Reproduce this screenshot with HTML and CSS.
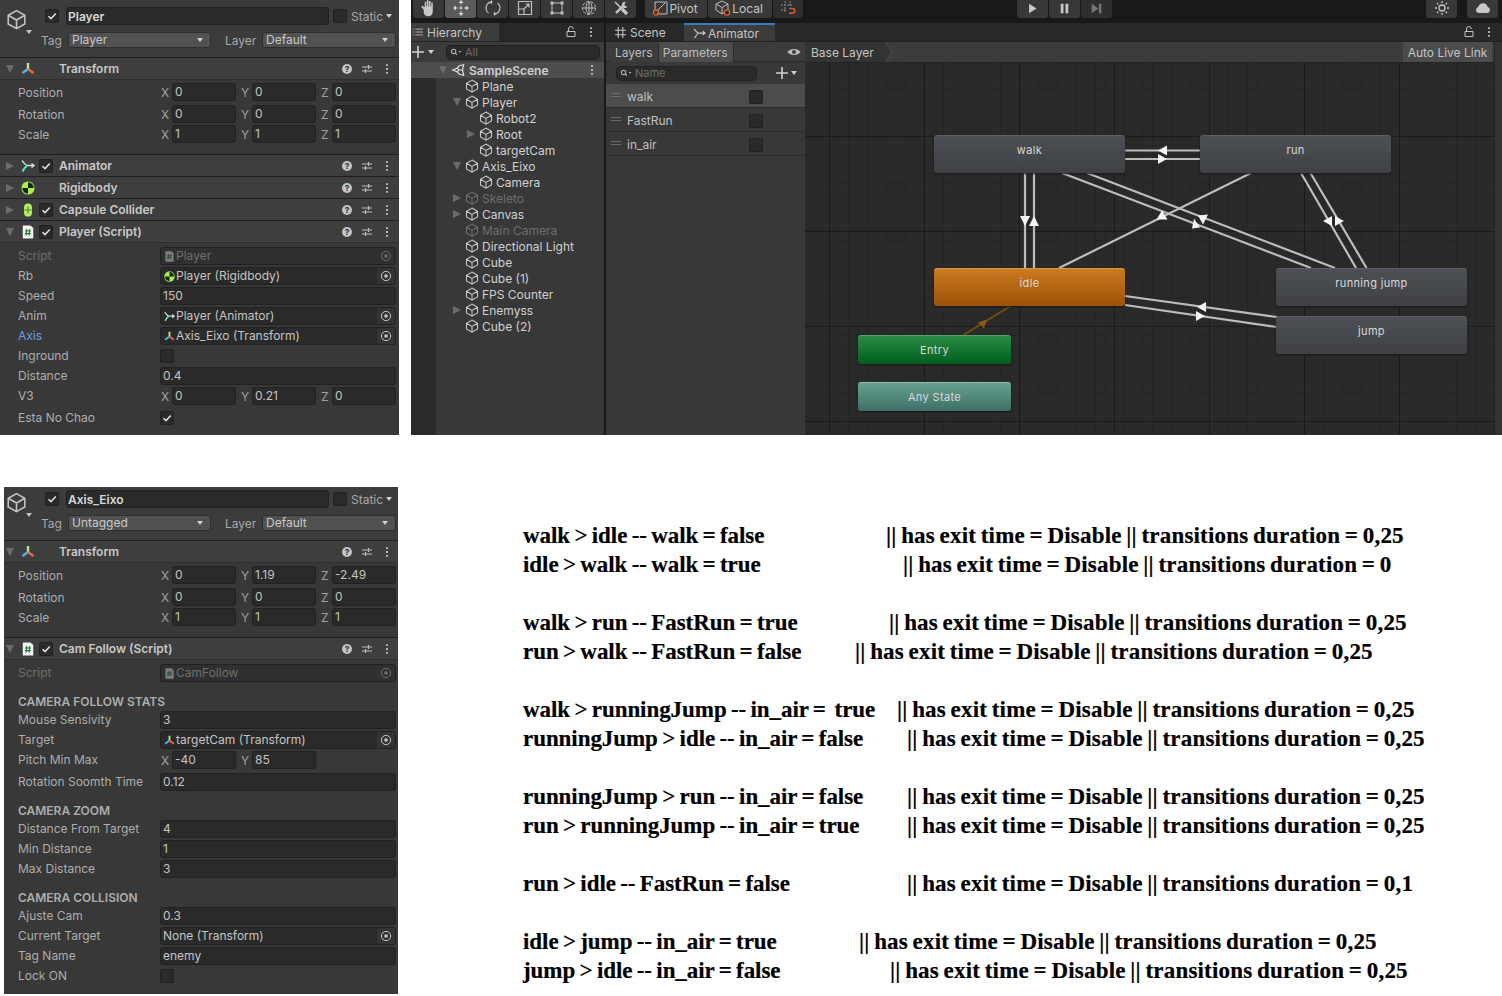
FILE: index.html
```html
<!DOCTYPE html>
<html lang="en">
<head>
  <meta charset="UTF-8">
  <title>Animator setup notes</title>
  <link rel="stylesheet" href="styles.css">
</head>
<body>
  <svg class="defs" width="0" height="0">
    <symbol id="cube" viewBox="0 0 16 16"><path d="M8 1.200 14.300 4.800v6.600L8 15 1.700 11.400V4.800zM1.700 4.800 8 8.400l6.300-3.600M8 8.400V15" fill="none" stroke="currentColor" stroke-width="1.200"/></symbol>
    <symbol id="transform" viewBox="0 0 14 14"><path d="M7 1v6" stroke="#b8e986" stroke-width="2.400"/><path d="M7 7 1.500 11" stroke="#4fb7e8" stroke-width="2.400"/><path d="M7 7l5.500 4" stroke="#ef6a3a" stroke-width="2.400"/></symbol>
    <symbol id="animator" viewBox="0 0 14 14"><path d="M1 1.500C3 3.500 4 6.500 6.500 6.500H13M10.500 4.500l2.500 2-2.500 2" fill="none" stroke="#d8d8d8" stroke-width="1.500"/><path d="M6 7C4 7.500 3 10 1.500 12.500" fill="none" stroke="#5fe0d8" stroke-width="2"/></symbol>
    <symbol id="rigid" viewBox="0 0 16 16"><circle cx="8" cy="8" r="7.500" fill="#a6f04c"/><path d="M8 1.500A6.500 6.500 0 0 1 14.500 8H8zM8 8v6.500A6.500 6.500 0 0 1 1.500 8z" fill="#15210c"/></symbol>
    <symbol id="capsule" viewBox="0 0 14 16"><rect x="2.500" y="0.500" width="9" height="15" rx="4.500" fill="#b4f060"/><path d="M7 4v8M3 8h8" stroke="#4a6a28" stroke-width="1"/></symbol>
    <symbol id="script" viewBox="0 0 14 16"><path d="M1 0.500h9l3 3v12H1z" fill="#f2f2f2"/><path d="M5.600 4.500 4.800 12M9 4.500 8.200 12M3.600 6.800h6.800M3.400 9.800h6.800" stroke="#1e7a3a" stroke-width="1.300" fill="none"/></symbol>
    <symbol id="sliders" viewBox="0 0 10 10"><path d="M0 3h10M0 7h10M6.500 1v4M3.500 5v4" stroke="#bdbdbd" stroke-width="1.200"/></symbol>
    <symbol id="dots" viewBox="0 0 10 10"><path d="M5 0.300v1.800M5 4.100v1.800M5 7.900v1.800" stroke="#c4c4c4" stroke-width="1.800"/></symbol>
    <symbol id="target" viewBox="0 0 12 12"><circle cx="6" cy="6" r="4.600" fill="none" stroke="currentColor" stroke-width="1"/><circle cx="6" cy="6" r="1.800" fill="currentColor"/></symbol>
    <symbol id="check" viewBox="0 0 12 12"><path d="M2.500 6.200 5 8.600 9.800 3.400" fill="none" stroke="#e2e2e2" stroke-width="1.500"/></symbol>
    <symbol id="lock" viewBox="0 0 12 12"><path d="M3.500 5V3a2.400 2.400 0 0 1 4.800 0M2 5.500h8v5H2z" fill="none" stroke="#c4c4c4" stroke-width="1"/></symbol>
    <symbol id="plus" viewBox="0 0 12 12"><path d="M6 0v12M0 6h12" stroke="#d0d0d0" stroke-width="1.600"/></symbol>
    <symbol id="search" viewBox="0 0 12 8"><circle cx="3.600" cy="3.400" r="2.200" fill="none" stroke="#b0b0b0" stroke-width="1.100"/><path d="M5.200 5 7 6.800" stroke="#b0b0b0" stroke-width="1.100"/><path d="M8.500 3h3L10 4.800z" fill="#b0b0b0"/></symbol>
  </svg>

  <div class="top">
    <section class="inspector">
      <header class="go-head">
        <div class="go-icon">
          <svg class="ic-go"><use href="#cube"/></svg>
          <i class="mini-arrow"></i>
        </div>
        <div class="go-rows">
          <div class="go-row first">
            <span class="box"><svg><use href="#check"/></svg></span>
            <div class="name">Player</div>
            <span class="box"></span>
            <span class="static">Static</span>
            <i class="mini-arrow light"></i>
          </div>
          <div class="go-row">
            <span class="small-label">Tag</span>
            <div class="drop tag">Player<i class="mini-arrow light"></i></div>
            <span class="small-label layer">Layer</span>
            <div class="drop lay">Default<i class="mini-arrow light"></i></div>
          </div>
        </div>
      </header>

      <div class="comp-head">
        <i class="tri down"></i><svg class="ic"><use href="#transform"/></svg><span class="box hidden"></span>
        <b>Transform</b>
        <div class="actions"><span class="help">?</span><svg><use href="#sliders"/></svg><svg><use href="#dots"/></svg></div>
      </div>
      <div class="comp-body transform-body">
        <div class="row gap"><span class="label">Position</span><div class="vec"><div class="axis"><span>X</span><div class="field">0</div></div><div class="axis"><span>Y</span><div class="field">0</div></div><div class="axis"><span>Z</span><div class="field">0</div></div></div></div>
        <div class="row"><span class="label">Rotation</span><div class="vec"><div class="axis"><span>X</span><div class="field">0</div></div><div class="axis"><span>Y</span><div class="field">0</div></div><div class="axis"><span>Z</span><div class="field">0</div></div></div></div>
        <div class="row"><span class="label">Scale</span><div class="vec"><div class="axis"><span>X</span><div class="field">1</div></div><div class="axis"><span>Y</span><div class="field">1</div></div><div class="axis"><span>Z</span><div class="field">1</div></div></div></div>
      </div>

      <div class="comp-head">
        <i class="tri"></i><svg class="ic"><use href="#animator"/></svg><span class="box"><svg><use href="#check"/></svg></span>
        <b>Animator</b>
        <div class="actions"><span class="help">?</span><svg><use href="#sliders"/></svg><svg><use href="#dots"/></svg></div>
      </div>
      <div class="comp-head">
        <i class="tri"></i><svg class="ic"><use href="#rigid"/></svg><span class="box hidden"></span>
        <b>Rigidbody</b>
        <div class="actions"><span class="help">?</span><svg><use href="#sliders"/></svg><svg><use href="#dots"/></svg></div>
      </div>
      <div class="comp-head">
        <i class="tri"></i><svg class="ic"><use href="#capsule"/></svg><span class="box"><svg><use href="#check"/></svg></span>
        <b>Capsule Collider</b>
        <div class="actions"><span class="help">?</span><svg><use href="#sliders"/></svg><svg><use href="#dots"/></svg></div>
      </div>
      <div class="comp-head">
        <i class="tri down"></i><svg class="ic"><use href="#script"/></svg><span class="box"><svg><use href="#check"/></svg></span>
        <b>Player (Script)</b>
        <div class="actions"><span class="help">?</span><svg><use href="#sliders"/></svg><svg><use href="#dots"/></svg></div>
      </div>
      <div class="comp-body script-body">
        <div class="row dim"><span class="label">Script</span><div class="field obj"><svg class="ic-obj"><use href="#script"/></svg>Player<span class="pick"><svg><use href="#target"/></svg></span></div></div>
        <div class="row"><span class="label">Rb</span><div class="field obj"><svg class="ic-obj"><use href="#rigid"/></svg>Player (Rigidbody)<span class="pick"><svg><use href="#target"/></svg></span></div></div>
        <div class="row"><span class="label">Speed</span><div class="field">150</div></div>
        <div class="row"><span class="label">Anim</span><div class="field obj"><svg class="ic-obj"><use href="#animator"/></svg>Player (Animator)<span class="pick"><svg><use href="#target"/></svg></span></div></div>
        <div class="row"><span class="label changed">Axis</span><div class="field obj"><svg class="ic-obj"><use href="#transform"/></svg>Axis_Eixo (Transform)<span class="pick"><svg><use href="#target"/></svg></span></div></div>
        <div class="row"><span class="label">Inground</span><span class="box"></span></div>
        <div class="row"><span class="label">Distance</span><div class="field">0.4</div></div>
        <div class="row gap"><span class="label">V3</span><div class="vec"><div class="axis"><span>X</span><div class="field">0</div></div><div class="axis"><span>Y</span><div class="field">0.21</div></div><div class="axis"><span>Z</span><div class="field">0</div></div></div></div>
        <div class="row"><span class="label">Esta No Chao</span><span class="box"><svg><use href="#check"/></svg></span></div>
      </div>
    </section>

    <section class="editor">
      <div class="toolbar">
        <div class="tool-group">
          <button class="tool hand"><svg viewBox="0 0 16 16"><path d="M4 9 1.800 6.500 3 5.600l1.800 1.600V2.400h1.300v4h.5V1h1.400v5.400h.5V1.600h1.300v4.800h.5V3h1.300v7.500c0 2.500-1.500 4-3.800 4-2 0-3-1-3.800-2.500z" fill="#c8c8c8"/></svg></button>
          <button class="tool on"><svg viewBox="0 0 16 16"><path d="M8 1v14M1 8h14" stroke="#d8d8d8" stroke-dasharray="3.500 1.500"/><path d="M8 0 5.500 3h5zM8 16l-2.500-3h5zM0 8l3-2.500v5zM16 8l-3-2.500v5z" fill="#d8d8d8"/></svg></button>
          <button class="tool"><svg viewBox="0 0 16 16"><path d="M3.500 13A6.200 6.200 0 0 1 7.500 1.900M12.500 3a6.200 6.200 0 0 1-4 11.100" fill="none" stroke="#bdbdbd" stroke-width="1.200"/><path d="M7 0v4.500L4.500 2.200zM9 16v-4.500l2.500 2.300z" fill="#bdbdbd"/></svg></button>
          <button class="tool"><svg viewBox="0 0 16 16"><path d="M1.500 1.500h13v13h-13zM1.500 9h5.500v5.500M6.500 9.500 12 4M8.500 4H12v3.500" fill="none" stroke="#bdbdbd" stroke-width="1.200"/></svg></button>
          <button class="tool"><svg viewBox="0 0 16 16"><path d="M3 3h10v10H3z" fill="none" stroke="#bdbdbd"/><path d="M1.500 1.500h3v3h-3zM11.500 1.500h3v3h-3zM1.500 11.500h3v3h-3zM11.500 11.500h3v3h-3z" fill="#bdbdbd"/></svg></button>
          <button class="tool"><svg viewBox="0 0 16 16"><circle cx="8" cy="8" r="6.500" fill="none" stroke="#bdbdbd" stroke-dasharray="3 1.500"/><path d="M8 2v12M2 8h12M5 8a3 6 0 0 1 6 0 3 6 0 0 1-6 0" fill="none" stroke="#bdbdbd"/></svg></button>
          <button class="tool"><svg viewBox="0 0 16 16"><path d="M2 2l7 7" stroke="#c8c8c8" stroke-width="1.500"/><path d="M9 9l5 5" stroke="#c8c8c8" stroke-width="3.200"/><path d="M3 13l7-7" stroke="#c8c8c8" stroke-width="2.400"/><path d="M9 3.500a3.500 3.500 0 0 0 4 4.500l1.500-1.500-2.500-.5-.5-2.500L13 2a3.500 3.500 0 0 0-4 1.500z" fill="#c8c8c8"/></svg></button>
        </div>
        <div class="tool-group pivot">
          <button class="tool wide"><svg viewBox="0 0 16 16"><path d="M3 2h12v12H5M3 2v8M13 3 6 10" fill="none" stroke="#bdbdbd"/><circle cx="4" cy="12.500" r="2.600" fill="none" stroke="#e8622c" stroke-width="1.300"/></svg>Pivot</button>
          <button class="tool wide"><svg viewBox="0 0 16 16"><path d="M7 1l6 3v6l-6 4-6-4V4zM1 4l6 3.500L13 4M7 7.500V14" fill="none" stroke="#bdbdbd"/><circle cx="12" cy="12.500" r="2.600" fill="#222" stroke="#e8622c" stroke-width="1.300"/></svg>Local</button>
          <button class="tool snap"><svg viewBox="0 0 16 16"><path d="M5 1v11M10 1v5M1 5h12M1 10h6" stroke="#8a8a8a" stroke-dasharray="2 1" fill="none"/><path d="M9 8.500h3.500a2.300 2.300 0 0 1 0 4.600H9" fill="none" stroke="#d05a2a" stroke-width="1.600"/></svg></button>
        </div>
        <div class="tool-group play">
          <button class="tool"><svg viewBox="0 0 16 16"><path d="M3 1v14L14 8z" fill="#c8c8c8"/></svg></button>
          <button class="tool"><svg viewBox="0 0 16 16"><path d="M2.500 1h4v14h-4zM9.500 1h4v14h-4z" fill="#c8c8c8"/></svg></button>
          <button class="tool"><svg viewBox="0 0 16 16"><path d="M1 1v14l9.500-7zM11.500 1H15v14h-3.500z" fill="#777"/></svg></button>
        </div>
        <div class="tool-group end">
          <button class="tool"><svg viewBox="0 0 16 16"><circle cx="8" cy="8" r="3" fill="none" stroke="#c8c8c8" stroke-width="1.300"/><path d="M8 1v2M8 13v2M1 8h2M13 8h2M3 3l1.400 1.400M11.600 11.600 13 13M3 13l1.400-1.400M11.600 4.400 13 3" stroke="#c8c8c8" stroke-width="1.300"/></svg></button>
          <button class="tool cloud"><svg viewBox="0 0 16 16"><path d="M3.800 13a3 3 0 0 1-.5-5.900 4.800 4.800 0 0 1 9.400 0A3 3 0 0 1 12.200 13z" fill="#c8c8c8"/></svg></button>
        </div>
      </div>

      <div class="panels">
        <div class="hierarchy">
          <div class="tabs">
            <div class="tab active hier-tab"><svg class="list-ic" viewBox="0 0 12 10"><path d="M3 1.500h9M3 5h9M3 8.500h9M0 1.500h1.500M0 5h1.500M0 8.500h1.500" stroke="#c4c4c4"/></svg>Hierarchy</div>
            <div class="tab-tools"><svg class="lock"><use href="#lock"/></svg><svg class="tdots"><use href="#dots"/></svg></div>
          </div>
          <div class="bar">
            <svg class="plus"><use href="#plus"/></svg><i class="mini-arrow light"></i>
            <div class="search hier-search"><svg><use href="#search"/></svg>All</div>
          </div>
          <div class="tree">
            <div class="scene-row"><i class="tri down"></i><svg class="unity" viewBox="0 0 16 16"><path d="M14.500 2 9.500 3.200 6.800 5.900 2 8l4.800 2.100 2.700 2.700 5 1.200-1.300-6zM6.800 5.900l2.700 2.100-2.700 2.100M9.500 8h3.700" fill="none" stroke="#e6e6e6" stroke-width="1.300"/></svg><b>SampleScene</b><svg class="tdots"><use href="#dots"/></svg></div>
            <div class="h-row"><span class="fold"></span><svg><use href="#cube"/></svg>Plane</div>
            <div class="h-row"><span class="fold"><i class="tri down"></i></span><svg><use href="#cube"/></svg>Player</div>
            <div class="h-row child"><span class="fold"></span><svg><use href="#cube"/></svg>Robot2</div>
            <div class="h-row child"><span class="fold"><i class="tri"></i></span><svg><use href="#cube"/></svg>Root</div>
            <div class="h-row child"><span class="fold"></span><svg><use href="#cube"/></svg>targetCam</div>
            <div class="h-row"><span class="fold"><i class="tri down"></i></span><svg><use href="#cube"/></svg>Axis_Eixo</div>
            <div class="h-row child"><span class="fold"></span><svg><use href="#cube"/></svg>Camera</div>
            <div class="h-row off"><span class="fold"><i class="tri"></i></span><svg><use href="#cube"/></svg>Skeleto</div>
            <div class="h-row"><span class="fold"><i class="tri"></i></span><svg><use href="#cube"/></svg>Canvas</div>
            <div class="h-row off"><span class="fold"></span><svg><use href="#cube"/></svg>Main Camera</div>
            <div class="h-row"><span class="fold"></span><svg><use href="#cube"/></svg>Directional Light</div>
            <div class="h-row"><span class="fold"></span><svg><use href="#cube"/></svg>Cube</div>
            <div class="h-row"><span class="fold"></span><svg><use href="#cube"/></svg>Cube (1)</div>
            <div class="h-row"><span class="fold"></span><svg><use href="#cube"/></svg>FPS Counter</div>
            <div class="h-row"><span class="fold"><i class="tri"></i></span><svg><use href="#cube"/></svg>Enemyss</div>
            <div class="h-row"><span class="fold"></span><svg><use href="#cube"/></svg>Cube (2)</div>
          </div>
        </div>

        <div class="animator">
          <div class="tabs">
            <div class="tab scene-tab"><svg class="grid-ic" viewBox="0 0 12 12"><path d="M3.500 0v12M8.500 0v12M0 3.500h12M0 8.500h12" stroke="#c4c4c4" stroke-width="1.200"/></svg>Scene</div>
            <div class="tab active anim-tab"><svg class="anim-ic" viewBox="0 0 14 12"><path d="M1 1c2 2 3 4.500 5 4.500h7M10.500 3.500l2.500 2-2.500 2M5.500 6C4 6.500 3 9 1.500 11" fill="none" stroke="#c8c8c8" stroke-width="1.300"/></svg>Animator</div>
            <div class="tab-tools"><svg class="lock"><use href="#lock"/></svg><svg class="tdots"><use href="#dots"/></svg></div>
          </div>
          <div class="anim-body">
            <div class="params">
              <div class="bar param-tabs">
                <span class="ptab">Layers</span><span class="ptab sel">Parameters</span>
                <svg class="eye" viewBox="0 0 14 10"><path d="M0.500 5C3 1 11 1 13.500 5 11 9 3 9 0.500 5z" fill="#bdbdbd"/><circle cx="7" cy="5" r="2" fill="#3a3a3a"/></svg>
              </div>
              <div class="param-search">
                <div class="search name-search"><svg><use href="#search"/></svg>Name</div>
                <svg class="plus"><use href="#plus"/></svg><i class="mini-arrow light"></i>
              </div>
              <div class="param sel"><span class="handle"></span><span class="pname">walk</span><span class="box"></span></div>
              <div class="param"><span class="handle"></span><span class="pname">FastRun</span><span class="box"></span></div>
              <div class="param"><span class="handle"></span><span class="pname">in_air</span><span class="box"></span></div>
            </div>
            <div class="graph-col">
              <div class="crumbs"><span class="crumb">Base Layer</span><span class="live">Auto Live Link</span></div>
              <div class="graph">
                <svg class="links" viewBox="805 63 689 371" width="689" height="371">
                  <g fill="none" stroke="#bdbdbd" stroke-width="2.200">
                    <path d="M1125 150.500H1200M1125 159H1200"/>
                    <path d="M1025 173V268M1034 173V268"/>
                    <path d="M1062 173 1311 268M1087 173 1335 268"/>
                    <path d="M1251 173 1059 268"/>
                    <path d="M1301 173 1356 268M1310.500 173 1366.500 268"/>
                    <path d="M1125 296 1277 317M1125 305 1277 327"/>
                  </g>
                  <path d="M963.500 335 1010.500 306" fill="none" stroke="#7a4c08" stroke-width="2"/>
                  <g fill="#f4f4f4">
                    <path d="M1158 150.500l9-5v10z"/>
                    <path d="M1167 159l-9-5v10z"/>
                    <path d="M1025 226l-5-10h10z"/>
                    <path d="M1034 216l-5 10h10z"/>
                    <path d="M1162 210.500l5.500 9h-11z"/>
                    <path d="M1192 228.500l2-10 6 9z"/>
                    <path d="M1208 214.500l-10 1 5 9z"/>
                    <path d="M1323 221l9-5v10z"/>
                    <path d="M1344 221l-9-5v10z"/>
                    <path d="M1197 307l9-5v10z"/>
                    <path d="M1205 316l-9-5v10z"/>
                  </g>
                  <path d="M987 319.500l-9 3 6 6z" fill="#8a5a10"/>
                </svg>
                <div class="node n-walk">walk</div>
                <div class="node n-run">run</div>
                <div class="node n-idle">idle</div>
                <div class="node n-rjump">running jump</div>
                <div class="node n-jump">jump</div>
                <div class="node n-entry">Entry</div>
                <div class="node n-any">Any State</div>
              </div>
            </div>
            <div class="side-strip"></div>
          </div>
        </div>
      </div>
    </section>
  </div>

  <div class="bottom">
    <div class="clip">
      <section class="inspector second">
        <header class="go-head">
          <div class="go-icon">
            <svg class="ic-go"><use href="#cube"/></svg>
            <i class="mini-arrow"></i>
          </div>
          <div class="go-rows">
            <div class="go-row first">
              <span class="box"><svg><use href="#check"/></svg></span>
              <div class="name">Axis_Eixo</div>
              <span class="box"></span>
              <span class="static">Static</span>
              <i class="mini-arrow light"></i>
            </div>
            <div class="go-row">
              <span class="small-label">Tag</span>
              <div class="drop tag">Untagged<i class="mini-arrow light"></i></div>
              <span class="small-label layer">Layer</span>
              <div class="drop lay">Default<i class="mini-arrow light"></i></div>
            </div>
          </div>
        </header>

        <div class="comp-head">
          <i class="tri down"></i><svg class="ic"><use href="#transform"/></svg><span class="box hidden"></span>
          <b>Transform</b>
          <div class="actions"><span class="help">?</span><svg><use href="#sliders"/></svg><svg><use href="#dots"/></svg></div>
        </div>
        <div class="comp-body transform-body">
          <div class="row gap"><span class="label">Position</span><div class="vec"><div class="axis"><span>X</span><div class="field">0</div></div><div class="axis"><span>Y</span><div class="field">1.19</div></div><div class="axis"><span>Z</span><div class="field">-2.49</div></div></div></div>
          <div class="row"><span class="label">Rotation</span><div class="vec"><div class="axis"><span>X</span><div class="field">0</div></div><div class="axis"><span>Y</span><div class="field">0</div></div><div class="axis"><span>Z</span><div class="field">0</div></div></div></div>
          <div class="row"><span class="label">Scale</span><div class="vec"><div class="axis"><span>X</span><div class="field">1</div></div><div class="axis"><span>Y</span><div class="field">1</div></div><div class="axis"><span>Z</span><div class="field">1</div></div></div></div>
        </div>

        <div class="comp-head">
          <i class="tri down"></i><svg class="ic"><use href="#script"/></svg><span class="box"><svg><use href="#check"/></svg></span>
          <b>Cam Follow (Script)</b>
          <div class="actions"><span class="help">?</span><svg><use href="#sliders"/></svg><svg><use href="#dots"/></svg></div>
        </div>
        <div class="comp-body script-body">
          <div class="row dim"><span class="label">Script</span><div class="field obj"><svg class="ic-obj"><use href="#script"/></svg>CamFollow<span class="pick"><svg><use href="#target"/></svg></span></div></div>

          <h4>CAMERA FOLLOW STATS</h4>
          <div class="row"><span class="label">Mouse Sensivity</span><div class="field">3</div></div>
          <div class="row"><span class="label">Target</span><div class="field obj"><svg class="ic-obj"><use href="#transform"/></svg>targetCam (Transform)<span class="pick"><svg><use href="#target"/></svg></span></div></div>
          <div class="row gap"><span class="label">Pitch Min Max</span><div class="vec"><div class="axis"><span>X</span><div class="field">-40</div></div><div class="axis"><span>Y</span><div class="field">85</div></div></div></div>
          <div class="row"><span class="label">Rotation Soomth Time</span><div class="field">0.12</div></div>

          <h4>CAMERA ZOOM</h4>
          <div class="row"><span class="label">Distance From Target</span><div class="field">4</div></div>
          <div class="row"><span class="label">Min Distance</span><div class="field">1</div></div>
          <div class="row"><span class="label">Max Distance</span><div class="field">3</div></div>

          <h4>CAMERA COLLISION</h4>
          <div class="row"><span class="label">Ajuste Cam</span><div class="field">0.3</div></div>
          <div class="row"><span class="label">Current Target</span><div class="field obj plain">None (Transform)<span class="pick"><svg><use href="#target"/></svg></span></div></div>
          <div class="row"><span class="label">Tag Name</span><div class="field">enemy</div></div>
          <div class="row"><span class="label">Lock ON</span><span class="box"></span></div>
        </div>
      </section>
    </div>

    <div class="notes">
      <p><span class="rule c363">walk &gt; idle -- walk = false</span><span class="opts">|| has exit time = Disable || transitions duration = 0,25</span></p>
      <p><span class="rule c380">idle &gt; walk -- walk = true</span><span class="opts">|| has exit time = Disable || transitions duration = 0</span></p>
      <p></p>
      <p><span class="rule c366">walk &gt; run -- FastRun = true</span><span class="opts">|| has exit time = Disable || transitions duration = 0,25</span></p>
      <p><span class="rule c332">run &gt; walk -- FastRun = false</span><span class="opts">|| has exit time = Disable || transitions duration = 0,25</span></p>
      <p></p>
      <p><span class="rule c374">walk &gt; runningJump -- in_air =&nbsp; true</span><span class="opts">|| has exit time = Disable || transitions duration = 0,25</span></p>
      <p><span class="rule c384">runningJump &gt; idle -- in_air = false</span><span class="opts">|| has exit time = Disable || transitions duration = 0,25</span></p>
      <p></p>
      <p><span class="rule c384">runningJump &gt; run -- in_air = false</span><span class="opts">|| has exit time = Disable || transitions duration = 0,25</span></p>
      <p><span class="rule c384">run &gt; runningJump -- in_air = true</span><span class="opts">|| has exit time = Disable || transitions duration = 0,25</span></p>
      <p></p>
      <p><span class="rule c384">run &gt; idle -- FastRun = false</span><span class="opts">|| has exit time = Disable || transitions duration = 0,1</span></p>
      <p></p>
      <p><span class="rule c336">idle &gt; jump -- in_air = true</span><span class="opts">|| has exit time = Disable || transitions duration = 0,25</span></p>
      <p><span class="rule c367">jump &gt; idle -- in_air = false</span><span class="opts">|| has exit time = Disable || transitions duration = 0,25</span></p>
    </div>
  </div>
</body>
</html>
```

FILE: styles.css
```css
* { box-sizing: border-box; }
html, body { margin: 0; padding: 0; background: #fff; }
body { width: 1502px; height: 996px; overflow: hidden; font-family: Inter, "Noto Sans", sans-serif; font-size: 12px; color: #c4c4c4; }
.defs { position: absolute; }
svg { display: block; flex: none; }
i { display: block; flex: none; }

.top { display: flex; gap: 12px; height: 435px; }
.bottom { display: flex; margin-top: 52px; }

/* inspector */
.inspector { width: 399px; height: 435px; background: #383838; flex: none; }
.clip { width: 394px; height: 507px; margin-left: 4px; overflow: hidden; flex: none; }
.second { height: 507px; margin-left: -4px; }
.go-head { display: flex; height: 57px; padding: 7px 3px 0 6px; background: #3c3c3c; }
.second .go-head { height: 53px; padding-top: 3px; }
.go-icon { width: 35px; flex: none; position: relative; }
.ic-go { width: 21px; height: 21px; margin-top: 2px; color: #c4c4c4; }
.go-icon .mini-arrow { position: absolute; left: 20px; top: 23px; }
.mini-arrow { width: 0; height: 0; border-left: 3.5px solid transparent; border-right: 3.5px solid transparent; border-top: 4px solid #c4c4c4; }
.mini-arrow.light { border-top-color: #d0d0d0; }
.go-rows { flex: 1; }
.go-row { display: flex; align-items: center; }
.go-row.first { height: 18px; margin: 0 0 7px 4px; }
.name { width: 263px; height: 18px; margin: 0 4px 0 7px; padding-left: 1px; line-height: 17px; font-weight: 600; color: #d8d8d8; background: #2a2a2a; border: 1px solid #212121; border-radius: 3px; }
.static { margin: 0 3px 0 4px; color: #a8a8a8; }
.small-label { color: #a8a8a8; width: 27px; }
.small-label.layer { width: 37px; margin-left: 14px; }
.drop { height: 16px; display: flex; align-items: center; justify-content: space-between; padding: 0 7px 1px 3px; background: #515151; border: 1px solid #2e2e2e; border-radius: 3px; color: #c8c8c8; }
.drop .mini-arrow { margin-top: 1px; }
.drop.tag { width: 143px; }
.drop.lay { width: 134px; }

.box { width: 14px; height: 14px; flex: none; background: #2a2a2a; border: 1px solid #212121; border-radius: 2px; }
.box svg { width: 12px; height: 12px; }
.box.hidden { visibility: hidden; }

.comp-head { display: flex; align-items: center; height: 22px; padding: 0 7px 0 6px; background: #3e3e3e; border-top: 1px solid #1f1f1f; }
.comp-head .ic { width: 14px; height: 14px; margin: 0 4px 0 7px; }
.comp-head b { margin-left: 6px; font-weight: 600; color: #c8c8c8; }
.tri { width: 0; height: 0; border-top: 4.5px solid transparent; border-bottom: 4.5px solid transparent; border-left: 8px solid #6b6b6b; }
.tri.down { border: 0; border-left: 4px solid transparent; border-right: 4px solid transparent; border-top: 8px solid #6b6b6b; }
.actions { display: flex; align-items: center; gap: 10px; margin-left: auto; }
.actions svg { width: 10px; height: 10px; }
.help { width: 10px; height: 10px; border-radius: 50%; background: #c4c4c4; color: #333; font-size: 8px; font-weight: 800; line-height: 10px; text-align: center; }

.comp-body { border-top: 1px solid #2e2e2e; }
.transform-body { height: 75px; padding-top: 2px; }
.script-body { padding-top: 3px; }
.row { display: flex; align-items: center; height: 20px; padding: 0 3px 0 18px; }
.row.gap { margin-bottom: 2px; }
.label { width: 142px; flex: none; color: #adadad; }
.script-body .label { margin-top: -1px; }
.label.changed { color: #6f9fe0; }
.row.dim .label, .row.dim .field { color: #6e6e6e; }
.row.dim .field { background: #303030; }
.row.dim .ic-obj { opacity: .4; }
.row.dim .pick { background: none; color: #6e6e6e; }
.field { flex: 1; height: 18px; padding-left: 2px; line-height: 16px; color: #c4c4c4; background: #2a2a2a; border: 1px solid #212121; border-radius: 3px; white-space: nowrap; overflow: hidden; }
.field.obj { display: flex; align-items: center; padding-left: 3px; }
.field.plain { padding-left: 2px; }
.ic-obj { width: 11px; height: 11px; margin-right: 1px; }
.pick { display: flex; align-items: center; justify-content: center; width: 18px; height: 16px; margin-left: auto; background: #333; color: #c4c4c4; }
.pick svg { width: 12px; height: 12px; }
.vec { display: flex; gap: 4px; flex: 1; }
.axis { display: flex; align-items: center; width: 76px; color: #a0a0a0; }
.axis span { width: 12px; flex: none; padding-left: 1px; }
.axis .field { flex: none; width: 64px; padding-left: 2px; }
h4 { margin: 0; padding: 11px 0 0 18px; height: 27px; line-height: 16px; font-size: 12px; font-weight: 600; color: #adadad; }

/* editor */
.editor { width: 1091px; height: 435px; flex: none; background: #191919; display: flex; flex-direction: column; }
.toolbar { display: flex; height: 23px; padding-left: 2px; }
.tool-group { display: flex; gap: 1px; height: 18px; }
.tool { display: flex; align-items: center; justify-content: center; width: 31px; height: 18px; padding: 0 0 2px; border: 0; border-radius: 0 0 3px 3px; background: #383838; color: #c4c4c4; font: 12px Inter, sans-serif; }
.tool svg { width: 16px; height: 16px; }
.tool.hand svg { width: 19px; height: 19px; }
.tool.on { background: #5b5b5b; }
.pivot { margin-left: 9px; }
.tool.wide { width: 62px; gap: 1px; padding-right: 2px; }
.tool.wide + .tool.wide { width: 64px; }
.tool.snap { width: 30px; background: #2e2e2e; }
.play { margin-left: 214px; }
.play .tool svg { width: 11px; height: 11px; }
.end { margin-left: auto; gap: 10px; padding-right: 4px; }
.play .tool:last-child { background: #2e2e2e; }

.panels { flex: 1; display: flex; gap: 2px; min-height: 0; }
.hierarchy { width: 193px; flex: none; display: flex; flex-direction: column; }
.animator { flex: 1; display: flex; flex-direction: column; min-width: 0; }
.tabs { display: flex; align-items: stretch; height: 19px; background: #282828; border-bottom: 1px solid #222; }
.tab { display: flex; align-items: center; color: #c4c4c4; }
.tab.active { background: #3c3c3c; }
.hier-tab { width: 88px; padding-left: 2px; gap: 4px; }
.list-ic { width: 10px; height: 10px; }
.grid-ic { width: 11px; height: 11px; }
.anim-ic { width: 13px; height: 11px; }
.scene-tab { width: 78px; padding-left: 9px; gap: 4px; }
.anim-tab { width: 91px; padding-left: 9px; gap: 2px; border-top: 2px solid #3a79bb; }
.tab-tools { display: flex; align-items: center; margin-left: auto; gap: 9px; padding-right: 8px; }
.lock { width: 12px; height: 12px; }
.tdots { width: 10px; height: 10px; }
.bar { display: flex; align-items: center; height: 20px; background: #3c3c3c; padding-left: 1px; }
.plus { width: 12px; height: 12px; }
.bar .mini-arrow { margin-left: 4px; }
.search { display: flex; align-items: center; gap: 3px; height: 15px; padding-left: 3px; font-size: 11px; color: #6e6e6e; background: #2a2a2a; border: 1px solid #212121; border-radius: 5px; }
.search svg { width: 12px; height: 8px; }
.hier-search { width: 154px; margin-left: 12px; }
.tree { flex: 1; background: linear-gradient(90deg, #2b2b2b 25px, #383838 25px); }
.scene-row { display: flex; align-items: center; height: 16px; padding: 0 7px 0 28px; background: #4d4d4d; }
.scene-row .unity { width: 14px; height: 14px; margin: 0 4px; }
.scene-row b { font-weight: 600; color: #d0d0d0; }
.scene-row .tdots { margin-left: auto; }
.h-row { display: flex; align-items: center; height: 16px; padding-left: 42px; color: #d0d0d0; }
.h-row svg { width: 14px; height: 14px; margin-right: 3px; color: #c8c8c8; }
.h-row.child { padding-left: 56px; }
.h-row.off, .h-row.off svg { color: #6e6e6e; }
.fold { width: 12px; flex: none; }

.anim-body { flex: 1; display: flex; min-height: 0; background: #383838; }
.params { width: 199px; flex: none; }
.param-tabs { padding-left: 4px; border-bottom: 1px solid #2a2a2a; }
.ptab { display: flex; align-items: center; height: 20px; padding: 1px 5px 0; background: #3c3c3c; border-right: 1px solid #2a2a2a; color: #bdbdbd; }
.ptab.sel { background: #4d4d4d; padding-left: 4px; }
.eye { width: 14px; height: 10px; margin-left: auto; margin-right: 4px; }
.param-search { display: flex; align-items: center; height: 22px; padding-left: 10px; }
.name-search { width: 141px; }
.param-search .plus { margin-left: 19px; }
.param-search .mini-arrow { margin-left: 3px; }
.param { display: flex; align-items: center; height: 24px; padding: 2px 0 0 5px; border-bottom: 1px solid #2c2c2c; }
.param.sel { background: #4c4c4c; }
.handle { width: 10px; height: 4px; margin-bottom: 4px; border-top: 1px solid #6b6b6b; border-bottom: 1px solid #6b6b6b; }
.pname { width: 122px; margin-left: 6px; color: #c0c0c0; }
.graph-col { width: 689px; flex: none; display: flex; flex-direction: column; }
.crumbs { display: flex; align-items: center; justify-content: space-between; height: 21px; padding-right: 2px; background: #3c3c3c; border-bottom: 1px solid #232323; }
.crumb { position: relative; padding: 2px 0 0 6px; width: 81px; height: 20px; line-height: 18px; background: #333; color: #c4c4c4; }
.crumb::after { content: ""; position: absolute; right: -7px; top: 3px; width: 14px; height: 14px; background: #333; border-top: 1px solid #555; border-right: 1px solid #555; transform: scaleX(.7) rotate(45deg); }
.live { width: 89px; height: 20px; line-height: 22px; text-align: center; background: #4c4c4c; color: #c4c4c4; }
.side-strip { flex: 1; background: #333; border-left: 1px solid #222; }

/* state machine canvas */
.graph {
  position: relative; flex: 1; overflow: hidden; background-color: #2a2a2a;
  background-image:
    linear-gradient(90deg, #1b1b1b 1px, transparent 1px),
    linear-gradient(#1b1b1b 1px, transparent 1px),
    linear-gradient(90deg, #252525 1px, transparent 1px),
    linear-gradient(#252525 1px, transparent 1px);
  background-size: 95px 100%, 100% 95px, 9.5px 100%, 100% 9.5px;
  background-position: 24px 0, 0 73px, 5px 0, 0 6px;
}
.links { position: absolute; left: 0; top: 0; }
.node { position: absolute; width: 191px; height: 38px; padding: 7px 0 0; text-align: center; font-size: 11px; line-height: 14px; letter-spacing: .35px; color: #d8d8d8; border-radius: 3px; border-top: 1px solid #5c5f63; background: linear-gradient(#4c4f54, #3f4145); box-shadow: 0 1px 2px #1a1a1a; }
.n-walk { left: 129px; top: 72px; }
.n-run { left: 395px; top: 72px; }
.n-idle { left: 129px; top: 205px; background: linear-gradient(#cc7a20, #9c5208); border-top-color: #de9648; }
.n-rjump { left: 471px; top: 205px; }
.n-jump { left: 471px; top: 253px; }
.n-entry { left: 53px; top: 272px; width: 153px; height: 29px; background: linear-gradient(#2b8a43, #005f1d); border-top-color: #4ea566; }
.n-any { left: 53px; top: 319px; width: 153px; height: 29px; background: linear-gradient(#68a08f, #3c6f66); border-top-color: #8ec0b0; }

/* notes */
.notes { margin: 34px 0 0 125px; font-family: "Liberation Serif", serif; font-weight: 700; font-size: 23px; line-height: 29px; word-spacing: -1.35px; -webkit-text-stroke: .2px #000; color: #000; white-space: nowrap; }
.notes p { display: flex; height: 29px; margin: 0; }
.rule { flex: none; letter-spacing: -.06px; }
.opts { letter-spacing: .2px; }
.c332 { width: 332px; }
.c336 { width: 336px; }
.c363 { width: 363px; }
.c366 { width: 366px; }
.c367 { width: 367px; }
.c374 { width: 374px; }
.c380 { width: 380px; }
.c384 { width: 384px; }
```
